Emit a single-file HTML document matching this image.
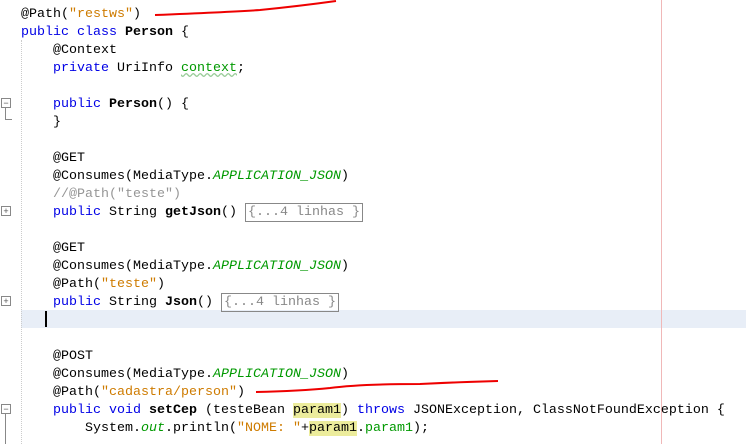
<!DOCTYPE html>
<html><head><style>
body{margin:0;width:746px;height:444px;background:#fff;position:relative;overflow:hidden;font-family:"Liberation Mono",monospace;font-size:13.33px;}
.l{position:absolute;left:21px;height:18px;line-height:18px;white-space:pre;color:#000;margin-top:2px;}
.k{color:#0000e6}.b{font-weight:bold}.s{color:#ce7b00}.g{color:#009900;font-style:italic}.c{color:#969696}.f{color:#009900}
.box{border:1px solid #888;color:#888;padding:1px 2px;}
.hl{background:#ecec9c}
.fold{position:absolute;left:1px;width:8px;height:8px;border:1px solid #888;font-size:9px;line-height:8px;text-align:center;color:#555;font-family:"Liberation Sans",sans-serif;}
</style></head><body>
<div style="position:absolute;left:21px;top:310px;width:725px;height:18px;background:#e8eef7"></div>
<div style="position:absolute;left:21px;top:40px;height:404px;border-left:1px dotted #ccc"></div>
<div style="position:absolute;left:661px;top:0;width:1px;height:444px;background:#f0b8b8"></div>
<div style="position:absolute;left:45px;top:311px;width:2px;height:16px;background:#000"></div>
<div class="l" style="top:4px">@Path(<span class="s">"restws"</span>)</div>
<div class="l" style="top:22px"><span class="k">public class</span> <span class="b">Person</span> {</div>
<div class="l" style="top:40px">    @Context</div>
<div class="l" style="top:58px">    <span class="k">private</span> UriInfo <span class="f" style="text-decoration:underline wavy #9c9;">context</span>;</div>
<div class="l" style="top:94px">    <span class="k">public</span> <span class="b">Person</span>() {</div>
<div class="l" style="top:112px">    }</div>
<div class="l" style="top:148px">    @GET</div>
<div class="l" style="top:166px">    @Consumes(MediaType.<span class="g">APPLICATION_JSON</span>)</div>
<div class="l" style="top:184px">    <span class="c">//@Path("teste")</span></div>
<div class="l" style="top:202px">    <span class="k">public</span> String <span class="b">getJson</span>() <span class="box">{...4 linhas }</span></div>
<div class="l" style="top:238px">    @GET</div>
<div class="l" style="top:256px">    @Consumes(MediaType.<span class="g">APPLICATION_JSON</span>)</div>
<div class="l" style="top:274px">    @Path(<span class="s">"teste"</span>)</div>
<div class="l" style="top:292px">    <span class="k">public</span> String <span class="b">Json</span>() <span class="box">{...4 linhas }</span></div>
<div class="l" style="top:346px">    @POST</div>
<div class="l" style="top:364px">    @Consumes(MediaType.<span class="g">APPLICATION_JSON</span>)</div>
<div class="l" style="top:382px">    @Path(<span class="s">"cadastra/person"</span>)</div>
<div class="l" style="top:400px">    <span class="k">public void</span> <span class="b">setCep</span> (testeBean <span class="hl">param1</span>) <span class="k">throws</span> JSONException, ClassNotFoundException {</div>
<div class="l" style="top:418px">        System.<span class="g">out</span>.println(<span class="s">"NOME: "</span>+<span class="hl">param1</span>.<span class="f">param1</span>);</div>
<div class="fold" style="top:98px">−</div>
<div style="position:absolute;left:5px;top:108px;width:6px;height:11px;border-left:1px solid #888;border-bottom:1px solid #888"></div>
<div class="fold" style="top:206px">+</div>
<div class="fold" style="top:296px">+</div>
<div class="fold" style="top:404px">−</div>
<div style="position:absolute;left:5px;top:414px;height:30px;border-left:1px solid #888"></div>
<svg style="position:absolute;left:0;top:0" width="746" height="444">
<path d="M155 15 Q230 12 260 10 Q300 6 336 1" stroke="#e00" stroke-width="2" fill="none"/>
<path d="M256 392 Q300 391 330 388 Q360 384 420 384 Q460 382 498 381" stroke="#e00" stroke-width="2" fill="none"/>
</svg>
</body></html>
